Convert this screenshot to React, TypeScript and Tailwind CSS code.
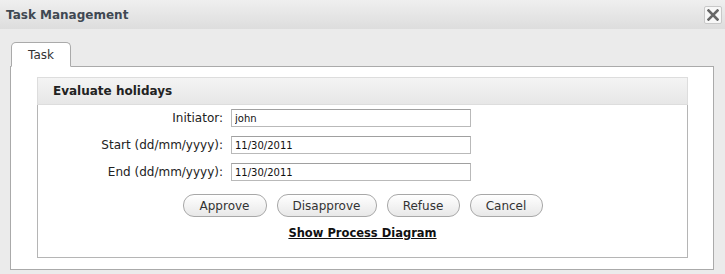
import type { ReactNode } from 'react'

const font = { fontFamily: '"DejaVu Sans", Verdana, sans-serif' }

type Field = { label: string; value: string }

const fields: Field[] = [
  { label: 'Initiator:', value: 'john' },
  { label: 'Start (dd/mm/yyyy):', value: '11/30/2011' },
  { label: 'End (dd/mm/yyyy):', value: '11/30/2011' },
]

const buttons = [
  { label: 'Approve', w: 'w-[84px]' },
  { label: 'Disapprove', w: 'w-[100px]' },
  { label: 'Refuse', w: 'w-[73px]' },
  { label: 'Cancel', w: 'w-[73px]' },
]

function CloseButton(): ReactNode {
  return (
    <button type="button" className="flex h-[18px] w-[18px] items-center justify-center rounded-[2px] border border-[#c8c8c8] bg-[#f7f7f7]">
      <svg width="12" height="12" viewBox="0 0 12 12">
        <path d="M1.5 1.5 L10.5 10.5 M10.5 1.5 L1.5 10.5" stroke="#666" strokeWidth="2.6" strokeLinecap="square" />
      </svg>
    </button>
  )
}

export default function App(): ReactNode {
  return (
    <div className="h-[274px] w-[725px] overflow-hidden bg-[#ebebeb] text-[#222]" style={font}>
      <div className="flex h-[29px] items-center justify-between bg-gradient-to-b from-[#efefef] to-[#dddddd] pl-[6px] pr-[3px]">
        <span className="text-[12px] font-bold text-[#3f4852]">Task Management</span>
        <CloseButton />
      </div>

      <div className="px-[10px] pt-[13px]">
        <div className="flex pl-[1px]">
          <div className="relative z-10 -mb-px flex h-[25px] w-[60px] items-center justify-center rounded-t-[5px] border border-b-white border-[#aaaaaa] bg-white pt-[1px] text-[12px] text-[#333]">
            Task
          </div>
        </div>

        <div className="h-[204px] w-[704px] border border-[#aaaaaa] bg-white pl-[26px] pt-[10px]">
          <div className="w-[651px]">
            <div className="flex h-[28px] items-center border border-[#dddddd] bg-gradient-to-b from-[#f4f4f4] to-[#e7e7e7] pl-[15px] text-[12px] font-bold text-[#222]">
              Evaluate holidays
            </div>
            <div className="h-[153px] border-x border-b border-[#b5b5b5] pt-[4px]">
              <div className="flex flex-col gap-[9px]">
                {fields.map((f) => (
                  <div key={f.label} className="flex items-center">
                    <span className="w-[185px] text-right text-[12px] leading-[14px] text-[#222]">{f.label}</span>
                    <input
                      readOnly
                      value={f.value}
                      className="ml-[8px] h-[18px] w-[240px] border border-[#b9b9b9] border-t-[#a0a0a0] bg-white px-[3px] text-[10px] text-[#111] outline-none"
                      style={font}
                    />
                  </div>
                ))}
              </div>

              <div className="mt-[13px] flex justify-center gap-[10px]">
                {buttons.map((b) => (
                  <button
                    key={b.label}
                    type="button"
                    className={`${b.w} h-[23px] rounded-[11px] border border-[#a8a8a8] bg-gradient-to-b from-[#ffffff] to-[#e8e8e8] text-[12px] text-[#333]`}
                    style={font}
                  >
                    {b.label}
                  </button>
                ))}
              </div>

              <div className="mt-[8px] text-center leading-[14px]">
                <a href="#" className="text-[11.5px] font-bold text-[#111] underline">Show Process Diagram</a>
              </div>
            </div>
          </div>
        </div>
      </div>
    </div>
  )
}
